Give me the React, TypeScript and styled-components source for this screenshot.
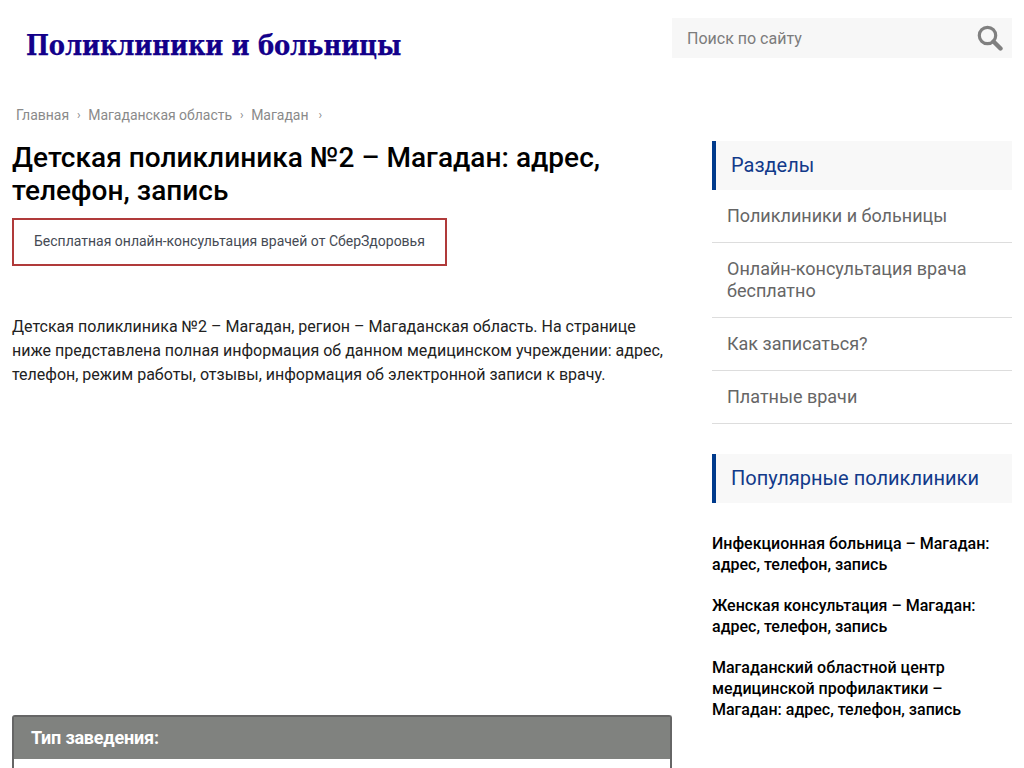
import styled, { createGlobalStyle } from "styled-components";

const GlobalStyle = createGlobalStyle`
  html, body {
    margin: 0;
    padding: 0;
    height: 768px;
    overflow: hidden;
    background: #fff;
  }
  body {
    font-family: Roboto, "Liberation Sans", sans-serif;
    color: #111;
  }
  * { box-sizing: border-box; }
`;

const Page = styled.div`
  width: 1024px;
  height: 768px;
  overflow: hidden;
  padding: 0 12px;
`;

const Header = styled.header`
  display: flex;
  justify-content: space-between;
  height: 100px;
  padding-top: 18px;
`;

const Logo = styled.a`
  margin: 10px 0 0 14px;
  font-family: "DejaVu Serif", serif;
  font-stretch: condensed;
  font-size: 27px;
  line-height: 36px;
  font-weight: 700;
  letter-spacing: -0.1px;
  -webkit-text-stroke: 0.25px #13008a;
  color: #13008a;
`;

const SearchBox = styled.div`
  width: 340px;
  height: 40px;
  background: #f7f7f7;
  display: flex;
  align-items: center;
  justify-content: space-between;
  padding: 0 9px 0 15px;
  font-size: 16px;
  color: #7c7c7c;
`;

const Columns = styled.div`
  display: flex;
  justify-content: space-between;
`;

const Main = styled.main`
  width: 660px;
`;

const Breadcrumbs = styled.div`
  display: flex;
  align-items: center;
  padding-left: 4px;
  height: 30px;
  font-size: 14px;
  color: #8a8a8a;
`;

const Crumb = styled.span`
  margin-right: 8px;
  letter-spacing: -0.02px;
`;

const Sep = styled.span`
  margin-right: 7.5px;
  font-size: 12px;
  &:last-child {
    margin-left: 2px;
  }
`;

const Title = styled.h1`
  margin: 11px 0 0;
  font-size: 28px;
  line-height: 33px;
  font-weight: 500;
  letter-spacing: 0.04px;
  color: #000;
`;

const Promo = styled.a`
  display: block;
  width: 435px;
  height: 48px;
  margin-top: 11px;
  border: 2px solid #b03a3a;
  padding: 0 20px;
  font-size: 14px;
  line-height: 42px;
  color: #454a54;
`;

const Intro = styled.p`
  margin: 49px 0 0;
  font-size: 16px;
  line-height: 24px;
  color: #222;
`;

const InfoCard = styled.section`
  margin-top: 328px;
  border: 2px solid #666;
  border-bottom: 0;
  border-radius: 3px 3px 0 0;
  height: 80px;
`;

const CardTitle = styled.div`
  height: 42px;
  background: #80827f;
  padding-left: 17px;
  font-size: 18px;
  line-height: 41px;
  font-weight: 700;
  letter-spacing: -0.2px;
  color: #fff;
`;

const Sidebar = styled.aside`
  width: 300px;
  padding-top: 41px;
`;

const SideHeading = styled.div`
  height: 49px;
  background: #f8f8f8;
  border-left: 4px solid #003a8c;
  padding-left: 15px;
  font-size: 20px;
  line-height: 49px;
  color: #123a8a;
`;

const NavList = styled.ul`
  list-style: none;
  margin: 0 0 30px;
  padding: 0;
`;

const NavItem = styled.li`
  padding: 15px 15px 15px;
  border-bottom: 1px solid #ddd;
  font-size: 18px;
  line-height: 22px;
  color: #666;
`;

const PopularList = styled.div`
  display: flex;
  flex-direction: column;
  gap: 20px;
  margin-top: 30px;
`;

const PopularLink = styled.a`
  font-size: 16px;
  line-height: 21px;
  font-weight: 500;
  color: #000;
`;

function SearchIcon() {
  return (
    <svg width="26" height="26" viewBox="0 0 26 26" fill="none" stroke="#808080">
      <circle cx="10.5" cy="10.5" r="8.2" strokeWidth="3.2" />
      <path d="M16.5 16.5 L23.5 23.5" strokeWidth="4.4" strokeLinecap="round" />
    </svg>
  );
}

const sections = [
  "Поликлиники и больницы",
  "Онлайн-консультация врача бесплатно",
  "Как записаться?",
  "Платные врачи",
];

const popular = [
  "Инфекционная больница – Магадан: адрес, телефон, запись",
  "Женская консультация – Магадан: адрес, телефон, запись",
  "Магаданский областной центр медицинской профилактики – Магадан: адрес, телефон, запись",
];

export default function App() {
  return (
    <Page>
      <GlobalStyle />
      <Header>
        <Logo>Поликлиники и больницы</Logo>
        <SearchBox>
          Поиск по сайту
          <SearchIcon />
        </SearchBox>
      </Header>
      <Columns>
        <Main>
          <Breadcrumbs>
            <Crumb>Главная</Crumb>
            <Sep>›</Sep>
            <Crumb>Магаданская область</Crumb>
            <Sep>›</Sep>
            <Crumb>Магадан</Crumb>
            <Sep>›</Sep>
          </Breadcrumbs>
          <Title>Детская поликлиника №2 – Магадан: адрес, телефон, запись</Title>
          <Promo>Бесплатная онлайн-консультация врачей от СберЗдоровья</Promo>
          <Intro>
            Детская поликлиника №2 – Магадан, регион – Магаданская область. На странице ниже
            представлена полная информация об данном медицинском учреждении: адрес, телефон, режим
            работы, отзывы, информация об электронной записи к врачу.
          </Intro>
          <InfoCard>
            <CardTitle>Тип заведения:</CardTitle>
          </InfoCard>
        </Main>
        <Sidebar>
          <SideHeading>Разделы</SideHeading>
          <NavList>
            {sections.map((s) => (
              <NavItem key={s}>{s}</NavItem>
            ))}
          </NavList>
          <SideHeading>Популярные поликлиники</SideHeading>
          <PopularList>
            {popular.map((p) => (
              <PopularLink key={p}>{p}</PopularLink>
            ))}
          </PopularList>
        </Sidebar>
      </Columns>
    </Page>
  );
}
